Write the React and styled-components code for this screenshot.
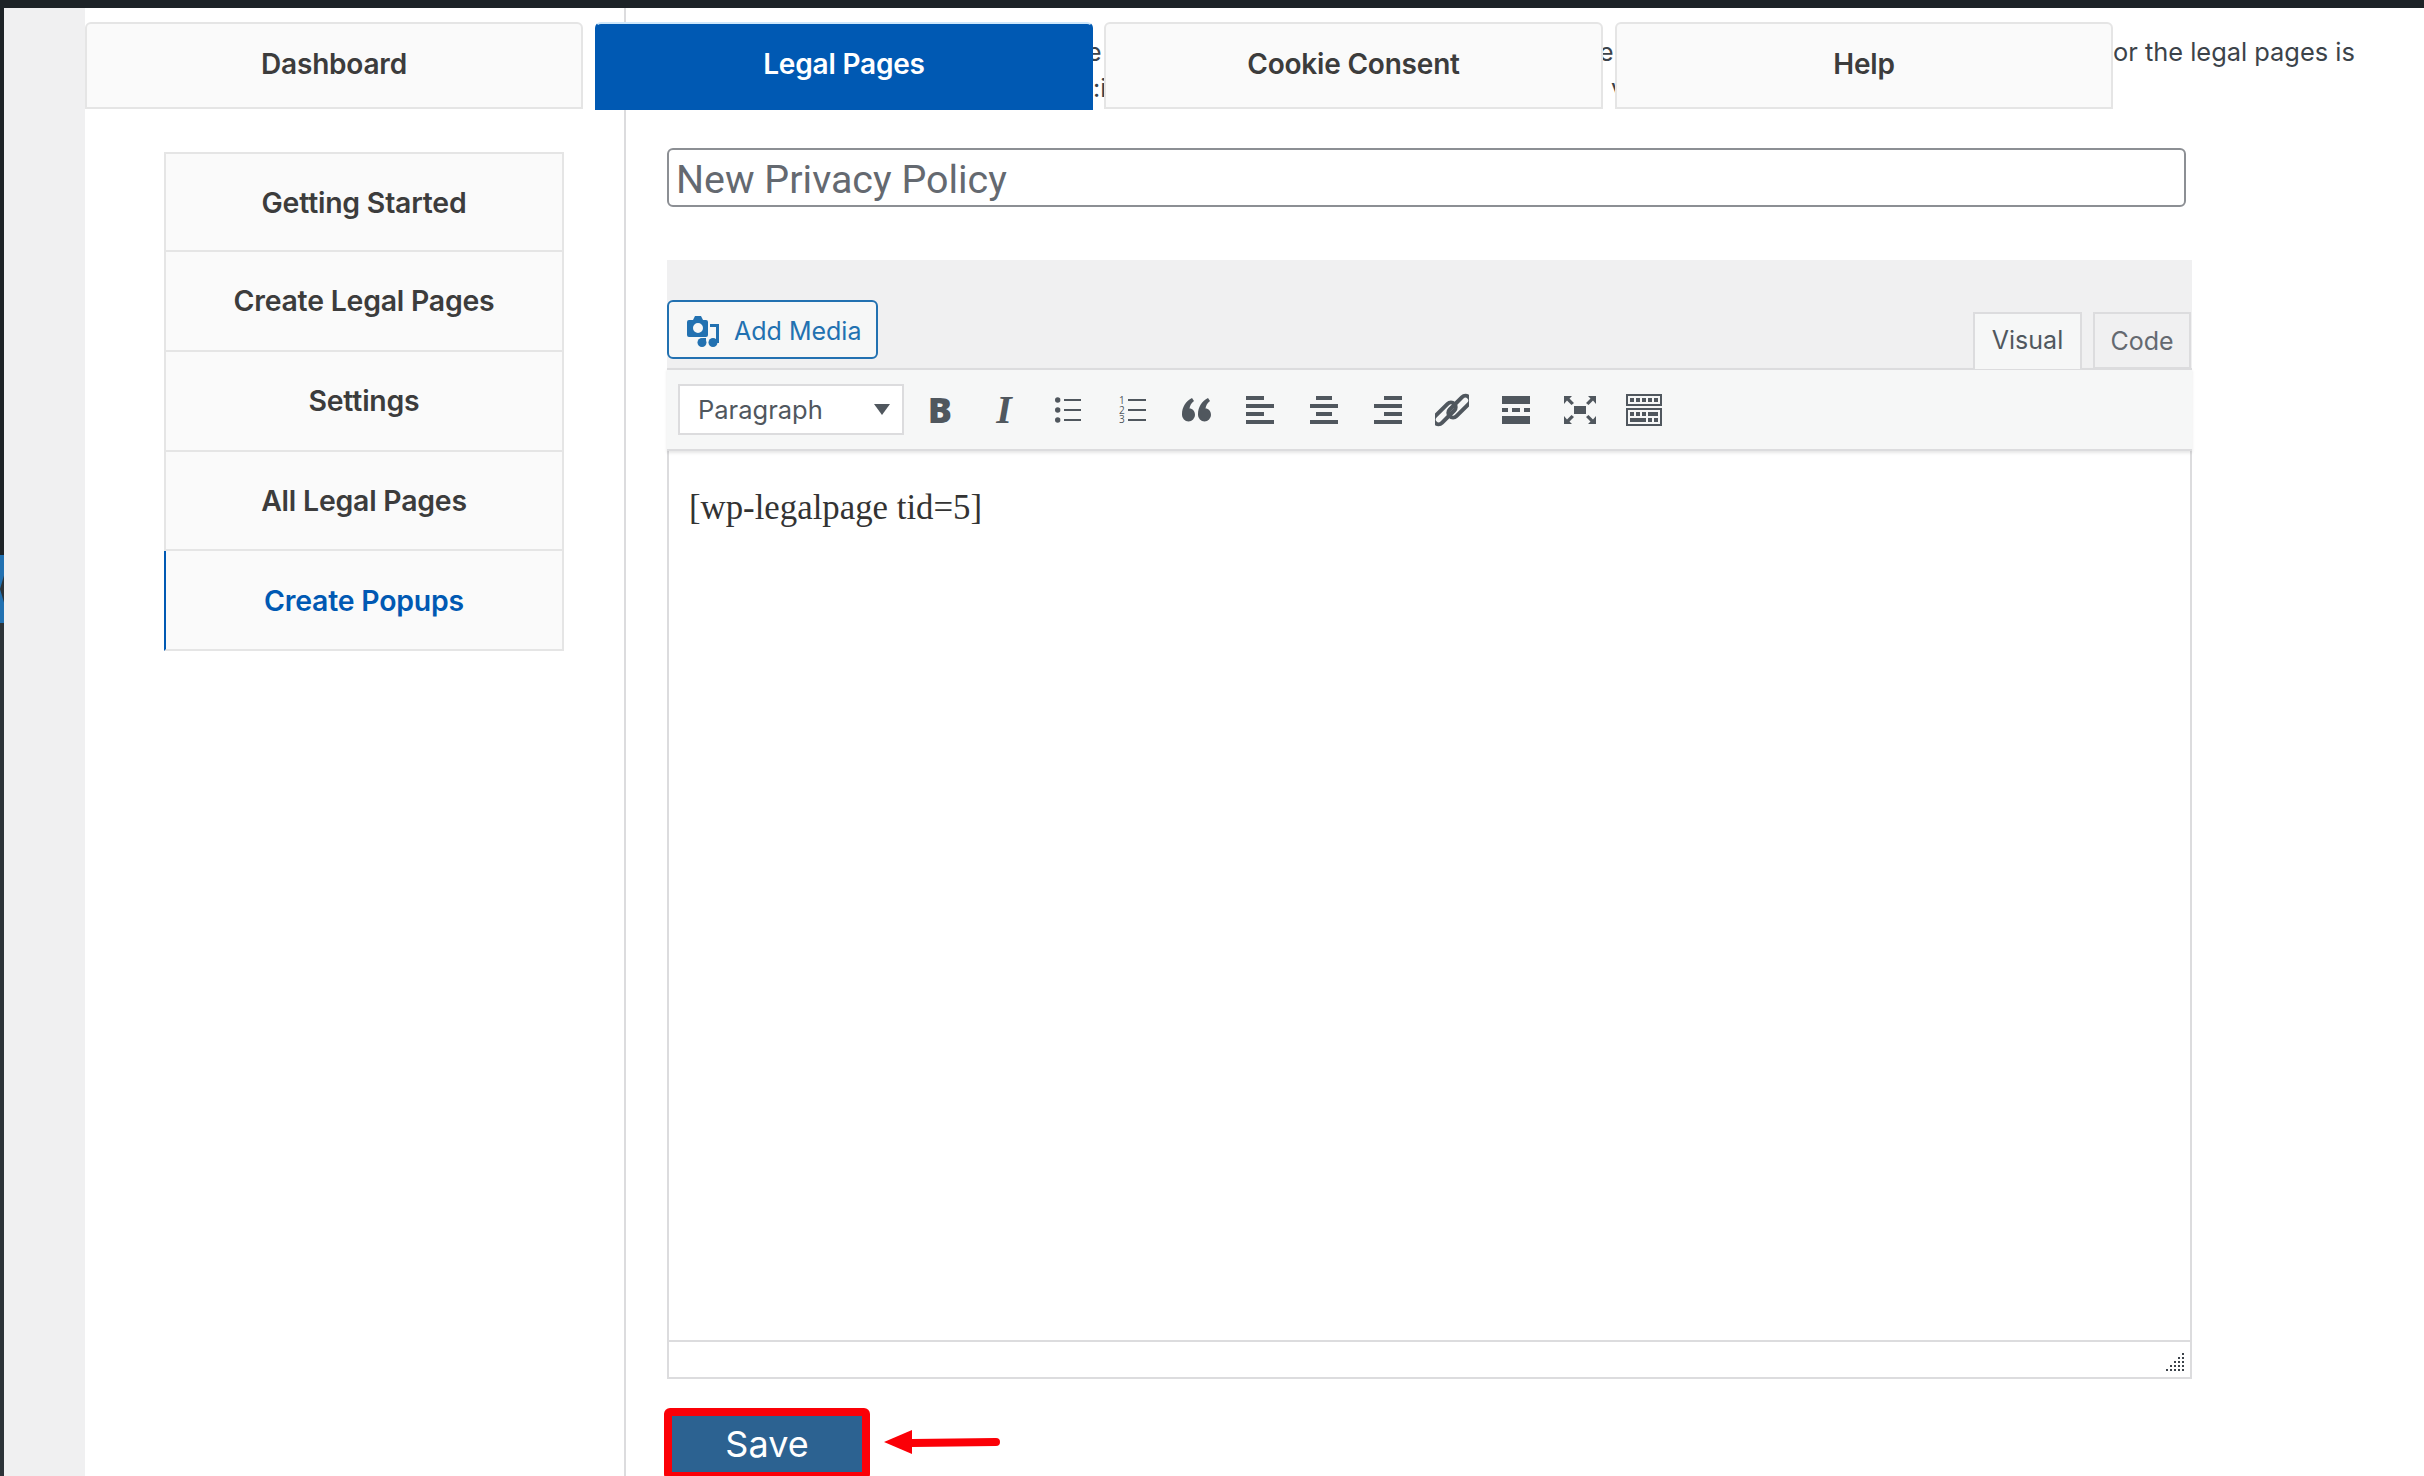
import React from "react";
import styled, { createGlobalStyle } from "styled-components";

const Global = createGlobalStyle`
  html, body { margin: 0; padding: 0; height: 100%; background: #fff; overflow: hidden; }
  #root { height: 100%; }
  * { box-sizing: border-box; }
`;

const Page = styled.div`
  height: 1476px;
  overflow: hidden;
  display: flex;
  flex-direction: column;
  font-family: Inter, "Liberation Sans", sans-serif;
  color: #3c434a;
`;
const TopBar = styled.div`
  height: 8px;
  flex: none;
  background: #1d2327;
`;
const Body = styled.div`
  flex: 1;
  min-height: 0;
  display: flex;
`;
const AdminStrip = styled.div`
  width: 4px;
  flex: none;
  display: flex;
  flex-direction: column;
  background: #2c3338;
`;
const StripTop = styled.div`
  height: 547px;
  background: #1d2327;
`;
const StripActive = styled.div`
  height: 68px;
  background: #2271b1;
  clip-path: polygon(0 0, 100% 0, 100% 30%, 0 50%, 100% 70%, 100% 100%, 0 100%);
`;
const Gutter = styled.div`
  width: 81px;
  flex: none;
  background: #f0f0f1;
`;
const Main = styled.div`
  flex: 1;
  min-width: 0;
  display: grid;
  grid-template: 1fr / 1fr;
  background: #fff;
`;
const Columns = styled.div`
  grid-area: 1 / 1;
  display: flex;
  min-height: 0;
`;
const Sidebar = styled.nav`
  width: 541px;
  flex: none;
  padding: 144px 0 0 79px;
  border-right: 2px solid #dcdcde;
`;
const Menu = styled.div`
  width: 400px;
  display: flex;
  flex-direction: column;
`;
const MenuItem = styled.div`
  height: ${(p) => (p.$first ? "100px" : "99.75px")};
  display: flex;
  align-items: center;
  justify-content: center;
  background: #fafafa;
  border: 2px solid #e5e5e5;
  border-top-width: ${(p) => (p.$first ? "2px" : "0")};
  border-left: ${(p) => (p.$active ? "2px solid #0059b3" : "2px solid #e5e5e5")};
  font-size: 28.4px;
  font-weight: 600;
  letter-spacing: -0.2px;
  color: ${(p) => (p.$active ? "#0059b3" : "#3c3c3c")};
`;
const Content = styled.section`
  flex: 1;
  min-width: 0;
  padding: 140px 0 0 41px;
  display: flex;
  flex-direction: column;
  align-items: flex-start;
`;
const TitleField = styled.div`
  width: 1519px;
  height: 59px;
  flex: none;
  display: flex;
  align-items: center;
  padding: 3px 0 0 7px;
  border: 2px solid #8c8f94;
  border-radius: 6px;
  font-family: Roboto, "Liberation Sans", sans-serif;
  font-size: 39.4px;
  color: #646970;
  background: #fff;
`;
const Editor = styled.div`
  width: 1525px;
  margin-top: 53px;
  flex: none;
`;
const EditorHead = styled.div`
  height: 108px;
  background: #f0f0f1;
  display: flex;
  align-items: flex-end;
  justify-content: space-between;
`;
const MediaButton = styled.div`
  width: 211px;
  height: 59px;
  margin-bottom: 9px;
  display: flex;
  align-items: center;
  gap: 15px;
  padding: 2px 0 0 18px;
  background: #f6f7f7;
  border: 2px solid #2271b1;
  border-radius: 6px;
  color: #2271b1;
  font-size: 25px;
`;
const ModeTabs = styled.div`
  display: flex;
  gap: 11px;
  margin-right: 1px;
  margin-bottom: -1px;
  position: relative;
  z-index: 1;
`;
const ModeTab = styled.div`
  width: ${(p) => p.$w}px;
  height: 57px;
  display: flex;
  align-items: center;
  justify-content: center;
  padding-bottom: ${(p) => (p.$active ? "3px" : "0")};
  font-size: 25px;
  color: ${(p) => (p.$active ? "#50575e" : "#646970")};
  background: ${(p) => (p.$active ? "#f6f7f7" : "#f0f0f1")};
  border: 2px solid #dcdcde;
  border-bottom: ${(p) => (p.$active ? "none" : "2px solid #dcdcde")};
`;
const Frame = styled.div`
  border: 2px solid #dcdcde;
  border-width: 0 2px 2px;
`;
const Toolbar = styled.div`
  height: 83px;
  margin: 0 -2px;
  padding: 0 0 0 11px;
  display: flex;
  align-items: center;
  position: relative;
  background: #f6f7f7;
  border-top: 2px solid #dcdcde;
  border-bottom: 2px solid #dcdcde;
  box-shadow: 0 2px 3px rgba(0, 0, 0, 0.1);
`;
const FormatSelect = styled.div`
  width: 226px;
  height: 51px;
  flex: none;
  margin-right: 4px;
  padding: 0 12px 0 18px;
  display: flex;
  align-items: center;
  justify-content: space-between;
  background: #fff;
  border: 2px solid #dcdcde;
  color: #50575e;
  font-size: 25.5px;
`;
const ToolButton = styled.div`
  width: 64px;
  height: 51px;
  flex: none;
  display: flex;
  align-items: center;
  justify-content: center;
  color: #50575e;
`;
const BoldGlyph = styled.span`
  font-family: "Open Sans", "Liberation Sans", sans-serif;
  font-weight: 800;
  font-size: 36px;
  line-height: 1;
`;
const ItalicGlyph = styled.span`
  font-family: "Liberation Serif", serif;
  font-style: italic;
  font-weight: 700;
  font-size: 40px;
  line-height: 1;
`;
const EditArea = styled.div`
  height: 889px;
  padding: 34px 0 0 20px;
  font-family: "Liberation Serif", serif;
  font-size: 34.8px;
  line-height: 46px;
  color: #333;
  background: #fff;
`;
const StatusBar = styled.div`
  height: 37px;
  display: flex;
  justify-content: flex-end;
  align-items: flex-start;
  padding: 11px 6px 0 0;
  border-top: 2px solid #dcdcde;
  background: #fff;
`;
const SaveRow = styled.div`
  margin: 29px 0 0 -3px;
  display: flex;
  align-items: center;
  gap: 14px;
  flex: none;
`;
const SaveButton = styled.div`
  width: 206px;
  height: 72px;
  display: flex;
  align-items: center;
  justify-content: center;
  background: #2c6291;
  border: 8px solid #fb0007;
  border-radius: 6px;
  color: #fff;
  font-size: 36px;
`;

const TabLayer = styled.div`
  grid-area: 1 / 1;
  align-self: start;
  margin-top: 14px;
  height: 87px;
  display: flex;
  position: relative;
`;
const Tab = styled.div`
  width: ${(p) => p.$w}px;
  flex: none;
  display: flex;
  align-items: center;
  justify-content: center;
  padding-bottom: 4px;
  margin-bottom: ${(p) => (p.$active ? "-1px" : "0")};
  border-radius: 6px 6px 0 0;
  font-size: 28px;
  font-weight: 600;
  letter-spacing: -0.2px;
  color: ${(p) => (p.$active ? "#fff" : "#3c3c3c")};
  background: ${(p) => (p.$active ? "#0059b3" : "#fafafa")};
  border: 2px solid ${(p) => (p.$active ? "#0059b3" : "#e5e5e5")};
  border-top-color: ${(p) => (p.$active ? "#cfe8fb" : "#e5e5e5")};
`;
const TabGap = styled.div`
  width: ${(p) => p.$w}px;
  flex: none;
  overflow: hidden;
  white-space: nowrap;
  font-size: 25px;
  line-height: 36px;
  padding-top: 12px;
  color: #3c434a;
`;
const GapLine = styled.div`
  margin-left: ${(p) => p.$x}px;
  height: 36px;
`;
const TrailingNotice = styled.div`
  padding-top: 12px;
  font-size: 25.4px;
  line-height: 36px;
  color: #3c434a;
  white-space: nowrap;
`;

const Ico = styled.svg`
  display: block;
  flex: none;
  fill: currentColor;
`;

const MediaIcon = () => (
  <Ico width="32" height="32" viewBox="0 0 32 32">
    <path
      fillRule="evenodd"
      d="M2 5h4l2-4h6l2 4h3a2 2 0 0 1 2 2v13a2 2 0 0 1-2 2H2a2 2 0 0 1-2-2V7a2 2 0 0 1 2-2zm9 3a5 5 0 1 0 0 10 5 5 0 0 0 0-10z"
    />
    <path d="M23 9h9v19h-3V12h-6z" />
    <circle cx="26" cy="27.5" r="4.5" />
    <path d="M16 23h3v5h-3z" />
    <circle cx="15" cy="27.5" r="4.5" />
  </Ico>
);
const Caret = () => (
  <Ico width="16" height="11" viewBox="0 0 16 11">
    <path d="M0 0h16L8 11z" />
  </Ico>
);
const BulletIcon = () => (
  <Ico width="26" height="26" viewBox="0 0 26 26">
    <circle cx="2.7" cy="3" r="2.7" />
    <circle cx="2.7" cy="13" r="2.7" />
    <circle cx="2.7" cy="23" r="2.7" />
    <path d="M9 2h17v2H9zM9 12h17v2H9zM9 22h17v2H9z" />
  </Ico>
);
const NumText = styled.text`
  font-family: "Open Sans", "Liberation Sans", sans-serif;
  font-size: 10px;
`;
const NumberIcon = () => (
  <Ico width="27" height="28" viewBox="0 0 27 28">
    <NumText x="0" y="8">1</NumText>
    <NumText x="0" y="17.5">2</NumText>
    <NumText x="0" y="27">3</NumText>
    <path d="M9 3h18v2H9zM9 13h18v2H9zM9 23h18v2H9z" />
  </Ico>
);
const QuoteIcon = () => (
  <Ico width="29" height="24" viewBox="0 0 29 24">
    <path d="M0 16C0 9 4 3 10 0l2 3C9 5 8 8 7.500 10.500 10.500 10.500 13 13 13 17a6.500 6.500 0 0 1-13 0z" />
    <path d="M16 16c0-7 4-13 10-16l2 3c-3 2-4 5-4.500 7.500 3 0 5.500 2.500 5.500 6.500a6.500 6.500 0 0 1-13 0z" />
  </Ico>
);
const AlignIcon = ({ x, w }) => (
  <Ico width="28" height="28" viewBox="0 0 28 28">
    <rect x={x} y="0" width={w} height="4" />
    <rect x="0" y="8" width="28" height="4" />
    <rect x={x} y="16" width={w} height="4" />
    <rect x="0" y="24" width="28" height="4" />
  </Ico>
);
const LinkIcon = () => (
  <Ico width="34" height="36" viewBox="0 0 34 36">
    <g transform="rotate(-45 17 18)" fill="none" stroke="currentColor" strokeWidth="4">
      <rect x="-4" y="10.500" width="27" height="9.500" rx="4.750" />
      <rect x="11" y="16" width="27" height="9.500" rx="4.750" />
    </g>
  </Ico>
);
const BreakIcon = () => (
  <Ico width="28" height="28" viewBox="0 0 28 28">
    <rect x="0" y="0" width="28" height="8" />
    <rect x="0" y="12" width="6" height="4" />
    <rect x="10" y="12" width="8" height="4" />
    <rect x="22" y="12" width="6" height="4" />
    <rect x="0" y="20" width="28" height="8" />
  </Ico>
);
const FullscreenIcon = () => (
  <Ico width="32" height="28" viewBox="0 0 32 28">
    <rect x="10" y="10" width="12" height="8" />
    <path d="M0 0h8L5.500 2.500 10 7 7.500 9 3 4.500 0 8z" />
    <path d="M32 0h-8l2.500 2.500L22 7l2.500 2L29 4.500 32 8z" />
    <path d="M0 28h8l-2.500-2.500L10 21l-2.500-2L3 23.500 0 20z" />
    <path d="M32 28h-8l2.500-2.500L22 21l2.500-2 4.500 4.500 3-3.500z" />
  </Ico>
);
const KeyboardIcon = () => (
  <Ico width="36" height="32" viewBox="0 0 36 32">
    <path fillRule="evenodd" d="M0 0h36v12H0zM2 2v8h32V2z" />
    <path fillRule="evenodd" d="M0 14h36v18H0zM2 16v14h32V16z" />
    <path d="M4 4h4v4H4zM10 4h4v4h-4zM16 4h4v4h-4zM22 4h4v4h-4zM28 4h4v4h-4z" />
    <path d="M4 18h4v4H4zM10 18h4v4h-4zM16 18h4v4h-4zM22 18h10v4H22z" />
    <path d="M4 24h16v4H4zM22 24h4v4h-4zM28 24h4v4h-4z" />
  </Ico>
);
const GripIcon = () => (
  <Ico width="18" height="18" viewBox="0 0 18 18">
    {[0, 1, 2, 3, 4].flatMap((r) =>
      Array.from({ length: r + 1 }, (_, c) => (
        <rect key={`${r}-${c}`} x={16 - c * 4} y={r * 4} width="2" height="2" />
      ))
    )}
  </Ico>
);
const RedArrow = styled(({ className }) => (
  <Ico className={className} width="116" height="26" viewBox="0 0 116 26">
    <path d="M0 13 28 1v24z" />
    <path d="M28 10l84-1a4 4 0 0 1 0 8l-84 1z" />
  </Ico>
))`
  color: #fb0007;
  margin-top: -4px;
`;

const tools = [
  <BoldGlyph key="b">B</BoldGlyph>,
  <ItalicGlyph key="i">I</ItalicGlyph>,
  <BulletIcon key="ul" />,
  <NumberIcon key="ol" />,
  <QuoteIcon key="q" />,
  <AlignIcon key="al" x={0} w={18} />,
  <AlignIcon key="ac" x={6} w={16} />,
  <AlignIcon key="ar" x={10} w={18} />,
  <LinkIcon key="l" />,
  <BreakIcon key="hr" />,
  <FullscreenIcon key="fs" />,
  <KeyboardIcon key="kb" />,
];
const menu = ["Getting Started", "Create Legal Pages", "Settings", "All Legal Pages", "Create Popups"];

export default function App() {
  return (
    <Page>
      <Global />
      <TopBar />
      <Body>
        <AdminStrip>
          <StripTop />
          <StripActive />
        </AdminStrip>
        <Gutter />
        <Main>
          <Columns>
            <Sidebar>
              <Menu>
                {menu.map((m, i) => (
                  <MenuItem key={m} $first={i === 0} $active={i === 4}>
                    {m}
                  </MenuItem>
                ))}
              </Menu>
            </Sidebar>
            <Content>
              <TitleField>New Privacy Policy</TitleField>
              <Editor>
                <EditorHead>
                  <MediaButton>
                    <MediaIcon />
                    Add Media
                  </MediaButton>
                  <ModeTabs>
                    <ModeTab $w={109} $active>Visual</ModeTab>
                    <ModeTab $w={98}>Code</ModeTab>
                  </ModeTabs>
                </EditorHead>
                <Frame>
                  <Toolbar>
                    <FormatSelect>
                      Paragraph
                      <Caret />
                    </FormatSelect>
                    {tools.map((t) => (
                      <ToolButton key={t.key}>{t}</ToolButton>
                    ))}
                  </Toolbar>
                  <EditArea>[wp-legalpage tid=5]</EditArea>
                  <StatusBar>
                    <GripIcon />
                  </StatusBar>
                </Frame>
              </Editor>
              <SaveRow>
                <SaveButton>Save</SaveButton>
                <RedArrow />
              </SaveRow>
            </Content>
          </Columns>
          <TabLayer>
            <Tab $w={498}>Dashboard</Tab>
            <TabGap $w={12} />
            <Tab $w={498} $active>Legal Pages</Tab>
            <TabGap $w={11}>
              <GapLine $x={-6}>e</GapLine>
              <GapLine $x={0}>:i</GapLine>
            </TabGap>
            <Tab $w={499}>Cookie Consent</Tab>
            <TabGap $w={12}>
              <GapLine $x={-4}>e</GapLine>
              <GapLine $x={8}>v</GapLine>
            </TabGap>
            <Tab $w={498}>Help</Tab>
            <TrailingNotice>or the legal pages is</TrailingNotice>
          </TabLayer>
        </Main>
      </Body>
    </Page>
  );
}
